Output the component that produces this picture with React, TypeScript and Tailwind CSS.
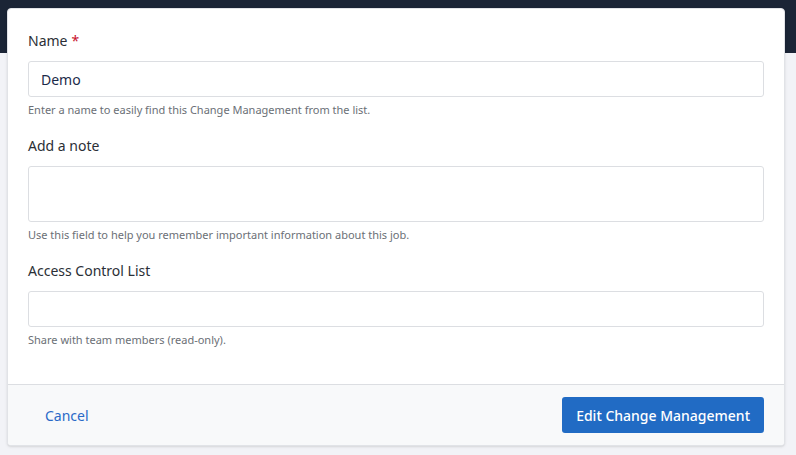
import React from 'react';

const FONT = { fontFamily: '"Noto Sans", "Open Sans", sans-serif' };

const Field: React.FC<{
  label: string;
  required?: boolean;
  help: string;
  children: React.ReactNode;
}> = ({ label, required, help, children }) => (
  <div className="flex flex-col">
    <label className="text-[14px] leading-[20px] text-[#2b2f36] mb-[10px]">
      {label}
      {required && <span className="text-[#c8102e] ml-[4px]">*</span>}
    </label>
    {children}
    <p className="mt-[5px] text-[11px] leading-[16px] text-[#6b6f76]">{help}</p>
  </div>
);

export default function App() {
  return (
    <div className="min-h-screen bg-[#f2f3f7]" style={FONT}>
      <div className="h-[53px] bg-[#1b2536]" />
      <div className="-mt-[45px] mx-[7px] w-[778px] bg-white rounded-[4px] border border-[#e1e3e7] shadow-sm overflow-hidden">
        <div className="px-[20px] pt-[22px] pb-[36px] flex flex-col gap-[18px]">
          <Field label="Name" required help="Enter a name to easily find this Change Management from the list.">
            <input
              defaultValue="Demo"
              className="h-[36px] w-full rounded-[3px] border border-[#dcdee2] px-[12px] text-[14px] text-[#1c2a4a] outline-none"
            />
          </Field>
          <Field label="Add a note" help="Use this field to help you remember important information about this job.">
            <textarea className="h-[56px] w-full resize-none rounded-[3px] border border-[#dcdee2] px-[12px] py-[8px] text-[14px] outline-none" />
          </Field>
          <Field label="Access Control List" help="Share with team members (read-only).">
            <input className="h-[36px] w-full rounded-[3px] border border-[#dcdee2] px-[12px] text-[14px] outline-none" />
          </Field>
        </div>
        <div className="h-[61px] border-t border-[#dcdee2] bg-[#f8f9fa] px-[20px] flex items-center justify-between">
          <button className="px-[17px] h-[36px] text-[14px] text-[#2a6ac8]">Cancel</button>
          <button className="h-[36px] px-[14px] rounded-[3px] bg-[#216bc4] text-white text-[14px] font-medium">
            Edit Change Management
          </button>
        </div>
      </div>
    </div>
  );
}
